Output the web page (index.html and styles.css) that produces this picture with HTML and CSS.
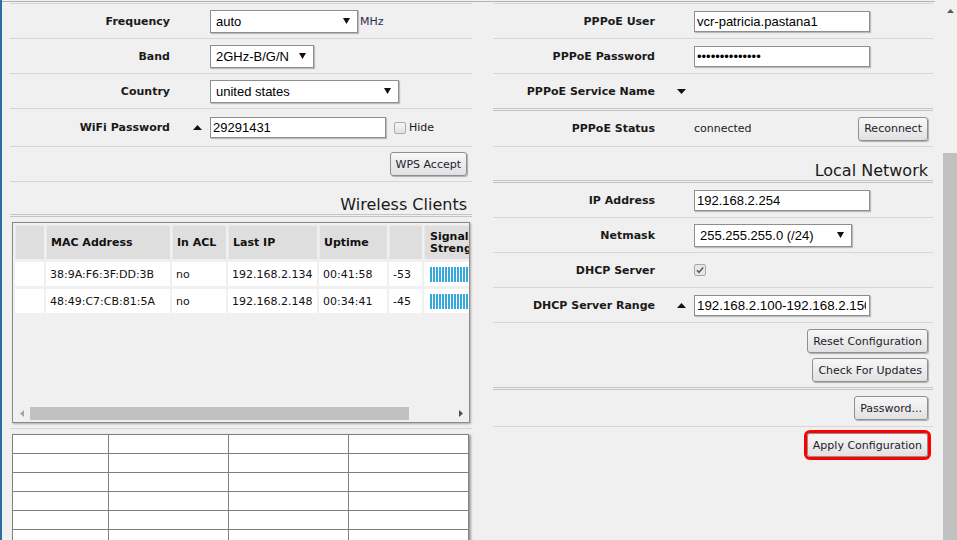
FILE: index.html
```html
<!DOCTYPE html>
<html>
<head>
<meta charset="utf-8">
<title>Router Configuration</title>
<link rel="stylesheet" href="styles.css">
</head>
<body>
<div class="screen">
  <div class="main">
    <div class="col left">
      <div class="row">
        <div class="lbl">Frequency</div><div class="mark"></div>
        <div class="ctl">
          <div class="sel w148"><span>auto</span><svg class="dd" width="7" height="6" viewBox="0 0 7 6"><polygon points="0,0 7,0 3.5,6"/></svg></div>
          <span class="unit">MHz</span>
        </div>
      </div>
      <div class="row">
        <div class="lbl">Band</div><div class="mark"></div>
        <div class="ctl">
          <div class="sel w104"><span>2GHz-B/G/N</span><svg class="dd" width="7" height="6" viewBox="0 0 7 6"><polygon points="0,0 7,0 3.5,6"/></svg></div>
        </div>
      </div>
      <div class="row">
        <div class="lbl">Country</div><div class="mark"></div>
        <div class="ctl">
          <div class="sel w189"><span>united states</span><svg class="dd" width="7" height="6" viewBox="0 0 7 6"><polygon points="0,0 7,0 3.5,6"/></svg></div>
        </div>
      </div>
      <div class="row tall">
        <div class="lbl">WiFi Password</div>
        <div class="mark"><svg width="9" height="5" viewBox="0 0 9 5"><polygon points="0,5 4.5,0 9,5"/></svg></div>
        <div class="ctl">
          <input class="txt" type="text" value="29291431">
          <span class="chk"></span><span class="chk-lbl">Hide</span>
        </div>
      </div>
      <div class="brow">
        <button class="btn">WPS Accept</button>
      </div>
      <div class="head"><span>Wireless Clients</span></div>
      <div class="boxrow">
        <div class="wbox">
          <div class="wbox-body">
            <table class="clients">
              <colgroup>
                <col class="c0"><col class="c1"><col class="c2"><col class="c3"><col class="c4"><col class="c5"><col class="c6">
              </colgroup>
              <thead>
                <tr><th></th><th>MAC Address</th><th>In ACL</th><th>Last IP</th><th>Uptime</th><th></th><th class="sig">Signal Strength</th></tr>
              </thead>
              <tbody>
                <tr><td></td><td>38:9A:F6:3F:DD:3B</td><td>no</td><td>192.168.2.134</td><td>00:41:58</td><td>-53</td><td class="sig"><div class="bars"></div></td></tr>
                <tr><td></td><td>48:49:C7:CB:81:5A</td><td>no</td><td>192.168.2.148</td><td>00:34:41</td><td>-45</td><td class="sig"><div class="bars"></div></td></tr>
              </tbody>
            </table>
          </div>
          <div class="hs">
            <div class="hs-btn"><svg width="4" height="7" viewBox="0 0 4 7"><polygon class="dis" points="4,0 0,3.5 4,7"/></svg></div>
            <div class="hs-thumb"></div>
            <div class="hs-fill"></div>
            <div class="hs-btn"><svg width="4" height="7" viewBox="0 0 4 7"><polygon class="act" points="0,0 4,3.5 0,7"/></svg></div>
          </div>
        </div>
      </div>
      <div class="gridrow">
        <table class="grid">
          <colgroup><col class="g0"><col class="g1"><col class="g1"><col class="g1"></colgroup>
          <tr><td></td><td></td><td></td><td></td></tr>
          <tr><td></td><td></td><td></td><td></td></tr>
          <tr><td></td><td></td><td></td><td></td></tr>
          <tr><td></td><td></td><td></td><td></td></tr>
          <tr><td></td><td></td><td></td><td></td></tr>
          <tr><td></td><td></td><td></td><td></td></tr>
        </table>
      </div>
    </div>

    <div class="col right">
      <div class="row">
        <div class="lbl">PPPoE User</div><div class="mark"></div>
        <div class="ctl"><input class="txt" type="text" value="vcr-patricia.pastana1"></div>
      </div>
      <div class="row">
        <div class="lbl">PPPoE Password</div><div class="mark"></div>
        <div class="ctl"><input class="txt pw" type="password" value="12345678901234"></div>
      </div>
      <div class="row sect">
        <div class="lbl">PPPoE Service Name</div>
        <div class="mark"><svg width="9" height="5" viewBox="0 0 9 5"><polygon points="0,0 9,0 4.5,5"/></svg></div>
        <div class="ctl"></div>
      </div>
      <div class="row status">
        <div class="lbl">PPPoE Status</div><div class="mark"></div>
        <div class="ctl split"><span class="val">connected</span><button class="btn">Reconnect</button></div>
      </div>
      <div class="head rhead"><span>Local Network</span></div>
      <div class="row">
        <div class="lbl">IP Address</div><div class="mark"></div>
        <div class="ctl"><input class="txt" type="text" value="192.168.2.254"></div>
      </div>
      <div class="row">
        <div class="lbl">Netmask</div><div class="mark"></div>
        <div class="ctl">
          <div class="sel w158"><span>255.255.255.0 (/24)</span><svg class="dd" width="7" height="6" viewBox="0 0 7 6"><polygon points="0,0 7,0 3.5,6"/></svg></div>
        </div>
      </div>
      <div class="row">
        <div class="lbl">DHCP Server</div><div class="mark"></div>
        <div class="ctl">
          <svg class="cbx" width="12" height="12" viewBox="0 0 12 12">
            <rect x="0.5" y="0.5" width="11" height="11" rx="1.5" fill="#e6e6e6" stroke="#a8a8a8"/>
            <path d="M3 6.2 L5 8.4 L9.2 3.4" fill="none" stroke="#5a5a5a" stroke-width="1.6"/>
          </svg>
        </div>
      </div>
      <div class="row">
        <div class="lbl">DHCP Server Range</div>
        <div class="mark"><svg width="9" height="5" viewBox="0 0 9 5"><polygon points="0,5 4.5,0 9,5"/></svg></div>
        <div class="ctl"><input class="txt rng" type="text" value="192.168.2.100-192.168.2.150"></div>
      </div>
      <div class="btns">
        <button class="btn">Reset Configuration</button>
        <button class="btn">Check For Updates</button>
      </div>
      <div class="brow pwrow">
        <button class="btn">Password...</button>
      </div>
      <div class="brow apply">
        <button class="btn hl">Apply Configuration</button>
      </div>
    </div>
  </div>
  <div class="vscroll">
    <div class="vs-up"><svg width="7" height="4" viewBox="0 0 7 4"><polygon points="0,4 3.5,0 7,4"/></svg></div>
    <div class="vs-gap"></div>
    <div class="vs-thumb"></div>
  </div>
</div>
</body>
</html>
```

FILE: styles.css
```css
html, body {
  margin: 0;
  padding: 0;
  background: #f0f0f0;
  overflow: hidden;
}

body {
  font-family: "DejaVu Sans", Verdana, sans-serif;
  font-size: 11px;
  color: #1a1a1a;
}

.screen {
  display: flex;
  height: 540px;
  border-left: 2px solid #2e6aa3;
}

.main {
  display: flex;
  gap: 21px;
  padding: 0 2px 0 8px;
  margin-top: 1px;
  border-top: 1px solid #b3b3b3;
  align-self: flex-start;
}

.col {
  padding-top: 1px;
}

.col.left { width: 462px; }
.col.right { width: 440px; }

.col > :first-child {
  border-top: 1px solid #d6d6d6;
}

.row {
  display: grid;
  grid-template-columns: 160px 40px 1fr;
  align-items: center;
  height: 34px;
  border-bottom: 1px solid #d6d6d6;
}

.right .row {
  grid-template-columns: 162px 39px 1fr;
}

.row.tall { height: 37px; }
.row.status { height: 35px; }
.row.sect { border-bottom: 3px double #c4c4c4; }

.lbl {
  font-weight: bold;
  text-align: right;
  white-space: nowrap;
}

.mark {
  display: flex;
  justify-content: flex-end;
  padding-right: 8px;
}

.mark svg, .dd {
  fill: #111;
  display: block;
}

.ctl {
  display: flex;
  align-items: center;
  padding-right: 5px;
}

.ctl.split {
  justify-content: space-between;
}

.sel {
  height: 23px;
  box-sizing: border-box;
  border: 1px solid #8e8e8e;
  background: #fff;
  box-shadow: 1px 1px 1px rgba(0, 0, 0, 0.22);
  display: flex;
  align-items: center;
  justify-content: space-between;
  padding: 0 7px 0 5px;
  font-family: "Liberation Sans", Arial, sans-serif;
  font-size: 13px;
  color: #000;
  white-space: nowrap;
}

.w148 { width: 148px; }
.w104 { width: 104px; }
.w189 { width: 189px; }
.w158 { width: 158px; }

.unit {
  margin-left: 2px;
  color: #2f2850;
}

.txt {
  width: 176px;
  height: 21px;
  box-sizing: border-box;
  margin: 0;
  border: 1px solid #8e8e8e;
  background: #fff;
  box-shadow: 1px 1px 1px rgba(0, 0, 0, 0.22);
  padding: 0 2px;
  font-family: "Liberation Sans", Arial, sans-serif;
  font-size: 13px;
  color: #000;
  outline: none;
}

.txt.rng {
  font-size: 13.3px;
  padding-right: 3px;
}

.chk {
  width: 10px;
  height: 10px;
  margin-left: 8px;
  border: 1px solid #adadad;
  border-radius: 2px;
  background: linear-gradient(#f6f6f6, #e2e2e2);
}

.chk-lbl {
  margin-left: 3px;
}

.cbx { display: block; }

.val { color: #1a1a1a; }

.btn {
  height: 24px;
  box-sizing: border-box;
  margin: 0;
  padding: 0 5px;
  border: 1px solid #8f8f8f;
  border-radius: 3px;
  background: linear-gradient(#f7f7f7, #e1e1e1);
  box-shadow: 1px 1px 1px rgba(0, 0, 0, 0.28);
  font-family: "DejaVu Sans", Verdana, sans-serif;
  font-size: 11px;
  color: #1c1c2c;
  white-space: nowrap;
}

.btn.hl {
  outline: 3px solid #ff0000;
  outline-offset: 0;
}

.brow {
  display: flex;
  justify-content: flex-end;
  align-items: center;
  height: 34px;
  padding-right: 5px;
  border-bottom: 1px solid #d6d6d6;
}

.brow.pwrow { height: 36px; }

.brow.apply {
  align-items: flex-start;
  height: auto;
  padding-top: 6px;
  border-bottom: none;
}

.btns {
  display: flex;
  flex-direction: column;
  align-items: flex-end;
  gap: 5px;
  height: 58px;
  padding: 6px 5px 0 0;
  border-bottom: 3px double #c4c4c4;
}

.head {
  display: flex;
  justify-content: flex-end;
  align-items: flex-end;
  height: 32px;
  padding-right: 5px;
  border-bottom: 3px double #c4c4c4;
  font-size: 16px;
  color: #1a1a1a;
}

.head.rhead { height: 33px; }

.boxrow {
  padding: 5px 2px;
  border-bottom: 1px solid #d6d6d6;
}

.wbox {
  width: 458px;
  height: 201px;
  box-sizing: border-box;
  border: 1px solid #8a8a8a;
  box-shadow: 1px 1px 2px rgba(0, 0, 0, 0.3);
  display: flex;
  flex-direction: column;
  overflow: hidden;
}

.wbox-body {
  flex: 1;
  min-height: 0;
  overflow: hidden;
}

.clients {
  table-layout: fixed;
  width: 493px;
  border-collapse: separate;
  border-spacing: 2px 3px;
  margin-top: -1px;
}

.c0 { width: 29px; }
.c1 { width: 124px; }
.c2 { width: 54px; }
.c3 { width: 89px; }
.c4 { width: 68px; }
.c5 { width: 33px; }
.c6 { width: 80px; }

.clients th {
  height: 34px;
  box-sizing: border-box;
  padding: 0 4px;
  background: #dedede;
  border-top: 1px solid #e9e9e9;
  border-left: 1px solid #e9e9e9;
  text-align: left;
  font-weight: bold;
  color: #111;
  line-height: 12px;
  white-space: normal;
}

.clients td {
  height: 24px;
  box-sizing: border-box;
  padding: 0 4px;
  background: #fff;
  color: #111;
  white-space: nowrap;
  overflow: hidden;
}

.clients th.sig {
  padding-left: 5px;
}

.clients td.sig {
  padding-left: 6px;
}

.bars {
  width: 62px;
  height: 15px;
  background: repeating-linear-gradient(to right, #36a8dd 0, #36a8dd 2px, transparent 2px, transparent 3px);
  margin-top: 1px;
}

.hs {
  display: flex;
  height: 13px;
  margin: 0 0 2px 0;
  align-items: center;
}

.hs-btn {
  width: 17px;
  height: 13px;
  display: flex;
  justify-content: center;
  align-items: center;
}

.hs-btn svg { display: block; }
.hs-btn .dis { fill: #a6a6a6; }
.hs-btn .act { fill: #4d4d4d; }

.hs-thumb {
  width: 379px;
  height: 13px;
  background: #c1c1c1;
}

.hs-fill { flex: 1; }

.gridrow {
  padding: 5px 2px 0 2px;
}

.grid {
  table-layout: fixed;
  width: 457px;
  border-collapse: collapse;
  background: #fff;
  box-shadow: 2px 1px 2px rgba(0, 0, 0, 0.35);
}

.g0 { width: 96px; }
.g1 { width: 120px; }

.grid td {
  height: 18px;
  padding: 0;
  border: 1px solid #808080;
}

.vscroll {
  width: 14px;
  margin-left: auto;
  display: flex;
  flex-direction: column;
}

.vs-up {
  height: 20px;
  display: flex;
  justify-content: center;
  padding-top: 9px;
  box-sizing: border-box;
}

.vs-up svg { fill: #5a5a5a; display: block; }

.vs-gap { height: 133px; }

.vs-thumb {
  flex: 1;
  background: #c1c1c1;
}
```
